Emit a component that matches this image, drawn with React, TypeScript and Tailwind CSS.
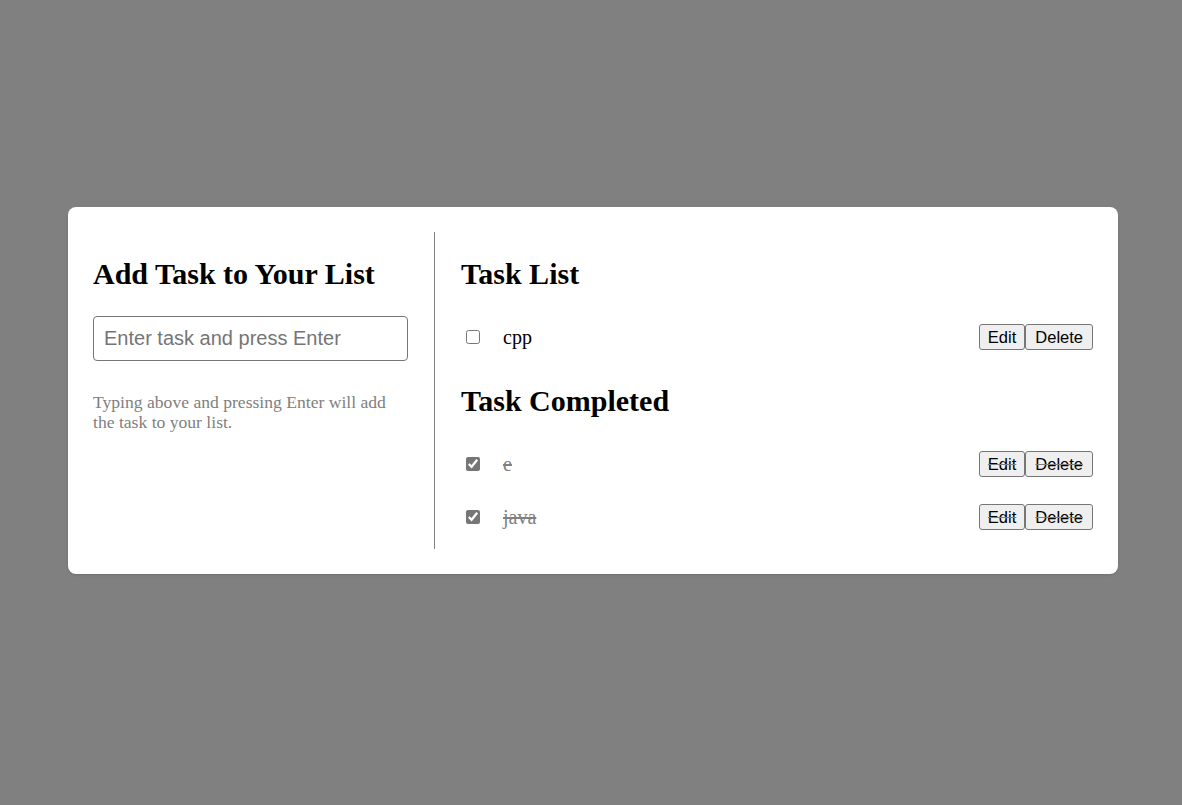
import { useState } from "react";

type Task = { id: number; text: string; done: boolean };

const serif = "font-['Liberation_Serif',_'Times_New_Roman',_serif]";
const sans = "font-['Liberation_Sans',_Arial,_sans-serif]";

function TaskRow({ task, onToggle }: { task: Task; onToggle: () => void }) {
  return (
    <div
      className={`flex items-center h-[26px] ${
        task.done ? "line-through text-[#808080]" : "text-black"
      }`}
    >
      <input
        type="checkbox"
        checked={task.done}
        onChange={onToggle}
        className="ml-[5px] w-[14px] h-[14px] accent-[#767676]"
      />
      <span className={`ml-[23px] text-[20px] ${serif}`}>{task.text}</span>
      <div className={`ml-auto flex text-[16.5px] text-black ${sans}`}>
        <button className="h-[26px] px-[8px] bg-[#efefef] border border-[#767676] rounded-[3px]">
          Edit
        </button>
        <button className="h-[26px] px-[9px] bg-[#efefef] border border-[#767676] rounded-[3px]">
          Delete
        </button>
      </div>
    </div>
  );
}

export default function App() {
  const [tasks, setTasks] = useState<Task[]>([
    { id: 1, text: "cpp", done: false },
    { id: 2, text: "e", done: true },
    { id: 3, text: "java", done: true },
  ]);

  const toggle = (id: number) =>
    setTasks((t) => t.map((x) => (x.id === id ? { ...x, done: !x.done } : x)));

  const open = tasks.filter((t) => !t.done);
  const done = tasks.filter((t) => t.done);

  return (
    <div className="min-h-[805px] bg-[#808080] pt-[207px]">
      <div className="ml-[68px] w-[1050px] bg-white rounded-[8px] p-[25px] flex shadow-sm">
        {/* Left: add task */}
        <div className="w-[342px] pr-[26px] border-r border-[#808080]">
          <h2 className={`mt-[26px] text-[30px] font-bold leading-[32px] ${serif}`}>
            Add Task to Your List
          </h2>
          <input
            type="text"
            placeholder="Enter task and press Enter"
            className={`mt-[26px] w-full h-[45px] px-[10px] text-[20px] border border-[#767676] rounded-[4px] placeholder:text-[#757575] ${sans}`}
          />
          <p className={`mt-[31px] pr-[10px] text-[17.6px] leading-[20px] text-[#808080] ${serif}`}>
            Typing above and pressing Enter will add the task to your list.
          </p>
        </div>

        {/* Right: lists */}
        <div className="flex-1 pl-[26px] pb-[19px]">
          <h2 className={`mt-[26px] text-[30px] font-bold leading-[32px] ${serif}`}>Task List</h2>
          <div className="mt-[34px] flex flex-col gap-[27px]">
            {open.map((t) => (
              <TaskRow key={t.id} task={t} onToggle={() => toggle(t.id)} />
            ))}
          </div>
          <h2 className={`mt-[35px] text-[30px] font-bold leading-[32px] ${serif}`}>
            Task Completed
          </h2>
          <div className="mt-[34px] flex flex-col gap-[27px]">
            {done.map((t) => (
              <TaskRow key={t.id} task={t} onToggle={() => toggle(t.id)} />
            ))}
          </div>
        </div>
      </div>
    </div>
  );
}
